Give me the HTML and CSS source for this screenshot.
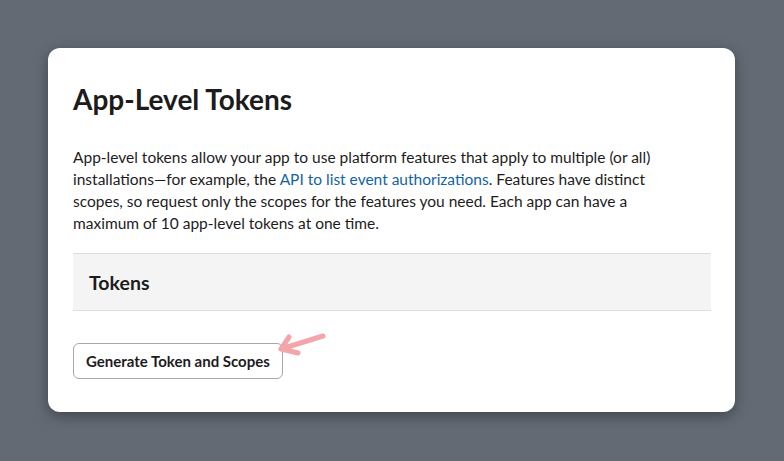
FILE: index.html
```html
<!DOCTYPE html>
<html>
<head>
<meta charset="utf-8">
<link rel="stylesheet" href="styles.css">
</head>
<body>
<div class="card">
  <h1 class="title">App-Level Tokens</h1>
  <p class="desc">App-level tokens allow your app to use platform features that apply to multiple (or all)<br>installations—for example, the <a class="link" href="#">API to list event authorizations</a>. Features have distinct<br>scopes, so request only the scopes for the features you need. Each app can have a<br>maximum of 10 app-level tokens at one time.</p>
  <div class="section"><h2 class="section-title">Tokens</h2></div>
  <div class="actions">
    <button class="btn">Generate Token and Scopes</button>
    <svg class="arrow" width="50" height="26" viewBox="0 0 50 26">
      <path d="M46 5 L4 18 M4 18 L12 6 M4 18 L21 22" fill="none" stroke="#f3a5aa" stroke-width="5" stroke-linecap="round" stroke-linejoin="round"/>
    </svg>
  </div>
</div>
</body>
</html>
```
FILE: styles.css
```css
html, body { margin: 0; padding: 0; }
body {
  background: #636a73;
  font-family: Lato, "Noto Sans", sans-serif;
  color: #1d1c1d;
  width: 784px;
  height: 461px;
  overflow: hidden;
}
.card {
  margin: 48px 0 0 48px;
  width: 687px;
  box-sizing: border-box;
  background: #fff;
  border-radius: 12px;
  padding: 34px 24px 33px 25px;
  box-shadow: 0 4px 14px rgba(0,0,0,0.35);
}
.title {
  margin: 0;
  font-size: 28px;
  line-height: 34px;
  font-weight: 700;
}
.desc {
  margin: 30px 0 0 0;
  font-size: 15.5px;
  line-height: 22px;
}
.link { color: #1264a3; text-decoration: none; }
.section {
  margin-top: 19px;
  background: #f4f4f4;
  border-top: 1px solid #dddddd;
  border-bottom: 1px solid #dddddd;
  padding: 0 16px;
  height: 56px;
  display: flex;
  align-items: center;
}
.section-title {
  margin: 0;
  font-size: 19.5px;
  font-weight: 700;
}
.actions {
  margin-top: 32px;
  display: flex;
  align-items: flex-start;
  position: relative;
}
.btn {
  font-family: Lato, "Noto Sans", sans-serif;
  font-size: 15px;
  font-weight: 700;
  color: #1d1c1d;
  background: #fff;
  border: 1px solid #a8a8a8;
  border-radius: 6px;
  height: 36px;
  padding: 0 12px;
}
.arrow {
  position: absolute;
  left: 204px;
  top: -12px;
}
```
